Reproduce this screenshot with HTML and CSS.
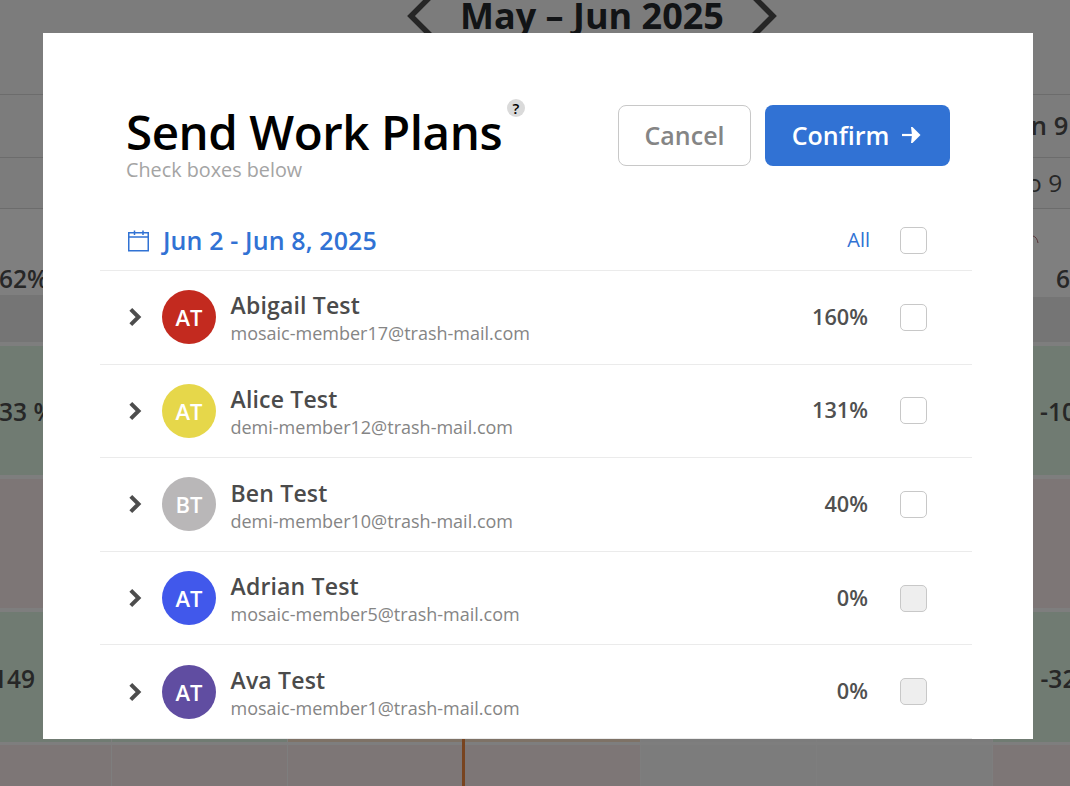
FILE: index.html
```html
<!DOCTYPE html>
<html lang="en">

<head>
    <meta charset="UTF-8">
    <meta name="viewport" content="width=device-width, initial-scale=1.0">
    <title>Send Work Plans</title>
    <link rel="stylesheet" href="styles.css">
</head>

<body>

    <!-- Planner page behind the modal -->
    <div class="planner">
        <div class="month-nav">
            <svg class="month-arrow" width="28" height="46" viewBox="0 0 28 46"><path d="M26.5 .5 L4 23 L26.5 45.5"/></svg>
            <h2>May – Jun 2025</h2>
            <svg class="month-arrow" width="28" height="46" viewBox="0 0 28 46"><path d="M1.5 .5 L24 23 L1.5 45.5"/></svg>
        </div>
        <div class="row dates">
            <div class="cell first"></div>
            <div class="cell last">Jun 9</div>
        </div>
        <div class="row days">
            <div class="cell first"></div>
            <div class="cell last">Mo 9</div>
        </div>
        <div class="row totals">
            <div class="cell first">62%</div>
            <div class="cell last">
                <svg class="spark" width="8" height="10" viewBox="0 0 8 10"><path d="M0 1 Q4 2 5 8"/></svg>
                62%
            </div>
        </div>
        <div class="row band">
            <div class="cell first"></div>
            <div class="cell last"></div>
        </div>
        <div class="row">
            <div class="cell first green">33 %</div>
            <div class="cell last green">-106 %</div>
        </div>
        <div class="row">
            <div class="cell first pink"></div>
            <div class="cell last pink"></div>
        </div>
        <div class="row tall">
            <div class="cell first green shift">149</div>
            <div class="cell green"></div>
            <div class="cell orange"></div>
            <div class="cell orange"></div>
            <div class="cell gray"></div>
            <div class="cell gray"></div>
            <div class="cell last green">-32 %</div>
        </div>
        <div class="row">
            <div class="cell first pink"></div>
            <div class="cell pink"></div>
            <div class="cell pink today"></div>
            <div class="cell pink"></div>
            <div class="cell gray"></div>
            <div class="cell gray"></div>
            <div class="cell last pink"></div>
        </div>
    </div>

    <div class="overlay">
        <div class="modal">
            <div class="modal-header">
                <div class="heading">
                    <h1>Send Work Plans<span class="help">?</span></h1>
                    <p>Check boxes below</p>
                </div>
                <button class="btn cancel">Cancel</button>
                <button class="btn confirm">Confirm
                    <svg width="19" height="18" viewBox="0 0 19 18"><path d="M0 9 H11" stroke="#fff" stroke-width="2.2"/><path d="M9 1 H10.5 L18.5 9 L10.5 17 H9 L10 9 Z" fill="#fff"/></svg>
                </button>
            </div>

            <div class="week">
                <svg class="calendar" width="22" height="22" viewBox="0 0 22 22"><path d="M.75 2.75 H20.25 V20.75 H.75 Z M.75 7 H20.25 M6.5 .5 V5 M15 .5 V5"/></svg>
                <span class="week-range">Jun 2 - Jun 8, 2025</span>
                <span class="all">All</span>
                <span class="checkbox"></span>
            </div>

            <div class="member">
                <svg class="chevron" width="14" height="20" viewBox="0 0 14 20"><path d="M2.8 2.3 L10.5 10 L2.8 17.7"/></svg>
                <div class="avatar red">AT</div>
                <div class="info">
                    <div class="name">Abigail Test</div>
                    <div class="email">mosaic-member17@trash-mail.com</div>
                </div>
                <span class="percent">160%</span>
                <span class="checkbox"></span>
            </div>
            <div class="member">
                <svg class="chevron" width="14" height="20" viewBox="0 0 14 20"><path d="M2.8 2.3 L10.5 10 L2.8 17.7"/></svg>
                <div class="avatar yellow">AT</div>
                <div class="info">
                    <div class="name">Alice Test</div>
                    <div class="email">demi-member12@trash-mail.com</div>
                </div>
                <span class="percent">131%</span>
                <span class="checkbox"></span>
            </div>
            <div class="member">
                <svg class="chevron" width="14" height="20" viewBox="0 0 14 20"><path d="M2.8 2.3 L10.5 10 L2.8 17.7"/></svg>
                <div class="avatar silver">BT</div>
                <div class="info">
                    <div class="name">Ben Test</div>
                    <div class="email">demi-member10@trash-mail.com</div>
                </div>
                <span class="percent">40%</span>
                <span class="checkbox"></span>
            </div>
            <div class="member">
                <svg class="chevron" width="14" height="20" viewBox="0 0 14 20"><path d="M2.8 2.3 L10.5 10 L2.8 17.7"/></svg>
                <div class="avatar blue">AT</div>
                <div class="info">
                    <div class="name">Adrian Test</div>
                    <div class="email">mosaic-member5@trash-mail.com</div>
                </div>
                <span class="percent">0%</span>
                <span class="checkbox disabled"></span>
            </div>
            <div class="member">
                <svg class="chevron" width="14" height="20" viewBox="0 0 14 20"><path d="M2.8 2.3 L10.5 10 L2.8 17.7"/></svg>
                <div class="avatar purple">AT</div>
                <div class="info">
                    <div class="name">Ava Test</div>
                    <div class="email">mosaic-member1@trash-mail.com</div>
                </div>
                <span class="percent">0%</span>
                <span class="checkbox disabled"></span>
            </div>
        </div>
    </div>

</body>

</html>
```
FILE: styles.css
```css
* {
    box-sizing: border-box;
}

body {
    margin: 0;
    height: 786px;
    overflow: hidden;
    font-family: "Open Sans", "Noto Sans", sans-serif;
}

h1, h2, p {
    margin: 0;
}

/* Planner */
.planner {
    height: 786px;
    overflow: hidden;
    background-color: #fff;
}

.month-nav {
    display: flex;
    justify-content: space-between;
    height: 95px;
    padding: 0 293px 0 407px;
    background-color: #f8f8f8;
    border-bottom: 1px solid #d8d8d8;
}

.month-nav h2 {
    margin-top: -9px;
    font-size: 36px;
    line-height: 50px;
    color: #25282c;
    white-space: nowrap;
}

.month-arrow {
    margin-top: -7px;
    fill: none;
    stroke: #4c4c4c;
    stroke-width: 5.5;
}

.row {
    display: flex;
    height: 133px;
    border-bottom: 4px solid #fdfdfd;
    font-size: 24.5px;
    font-weight: 600;
    color: #4e4e4e;
}

.row.tall {
    border-bottom-width: 3px;
}

.cell {
    display: flex;
    flex-shrink: 0;
    align-items: center;
    width: 176.3px;
    padding-top: 2px;
    border-right: 1px solid #fdfdfd;
    white-space: nowrap;
}

.cell.first {
    width: 112px;
    text-indent: -1px;
}

.cell.last {
    width: 77px;
    margin-left: auto;
    padding-left: 47px;
    border: 0;
    overflow: hidden;
}

.dates, .days {
    height: 63px;
    padding-bottom: 4px;
    background-color: #f8f8f8;
    border-bottom: 1px solid #d8d8d8;
}

.days {
    height: 51px;
    font-weight: 400;
}

.dates .cell, .days .cell {
    border: 0;
}

.dates .cell.last {
    padding-left: 14px;
    font-size: 25.5px;
}

.days .cell.last {
    padding-left: 12px;
}

.totals {
    height: 86px;
    border: 0;
}

.totals .cell {
    align-items: flex-end;
    border: 0;
}

.totals .cell.last {
    padding-left: 40px;
}

.spark {
    flex-shrink: 0;
    margin: 0 15px 50px 0;
    fill: none;
    stroke: #b06870;
}

.band {
    height: 51px;
}

.band .cell {
    border: 0;
    background-color: #eaeaea;
}

.band .cell.last {
    margin-top: 2px;
}

.green {
    background-color: #e0f6e5;
}

.pink {
    background-color: #fbeded;
}

.orange {
    background-color: #fce4cc;
}

.gray {
    background-color: #f9f9f9;
}

.cell.shift {
    padding-top: 3px;
    text-indent: -7px;
}

.today {
    position: relative;
}

.today::after {
    content: "";
    position: absolute;
    top: -6px;
    right: -1px;
    bottom: 0;
    width: 3px;
    background-color: #f08840;
}

/* Modal */
.overlay {
    position: fixed;
    inset: 0;
    padding: 33px 37px 47px 43px;
    background-color: rgba(0, 0, 0, 0.5);
}

.modal {
    height: 706px;
    padding: 72px 61px 0 57px;
    overflow: hidden;
    background-color: #fff;
}

.modal-header {
    display: flex;
    height: 106px;
    padding: 0 22px 0 26px;
}

.heading {
    flex: 1;
}

h1 {
    position: relative;
    font-size: 47.5px;
    font-weight: 600;
    letter-spacing: -0.45px;
    line-height: 54px;
    white-space: nowrap;
}

.heading p {
    font-size: 19.8px;
    line-height: 22px;
    color: #a4a4a4;
}

.help {
    position: absolute;
    left: 381px;
    top: -6px;
    width: 18px;
    height: 18px;
    border-radius: 50%;
    background-color: #dadada;
    font-size: 15px;
    letter-spacing: 0;
    line-height: 18px;
    text-align: center;
}

.btn {
    height: 61px;
    padding-bottom: 3px;
    border-radius: 8px;
    font-family: inherit;
    font-size: 25px;
    font-weight: 600;
}

.cancel {
    width: 133px;
    margin-right: 14px;
    border: 1px solid #c8c8c8;
    background-color: #fff;
    color: #858585;
}

.confirm {
    display: flex;
    align-items: center;
    justify-content: center;
    gap: 13px;
    width: 185px;
    padding-right: 8px;
    border: 0;
    background-color: #3172d4;
    color: #fff;
}

.week {
    display: flex;
    align-items: center;
    height: 60px;
    padding: 0 45px 0 28px;
    border-bottom: 1px solid #ebebeb;
    color: #3172d4;
}

.calendar {
    margin-right: 13px;
    fill: none;
    stroke: #3172d4;
    stroke-width: 1.5;
}

.week-range {
    flex: 1;
    padding-bottom: 2px;
    font-size: 25px;
    font-weight: 600;
    letter-spacing: 0.12px;
}

.all {
    margin-right: 30px;
    padding-bottom: 2px;
    font-size: 20px;
}

.checkbox {
    width: 27px;
    height: 27px;
    border: 1px solid #c8c8c8;
    border-radius: 5px;
}

.checkbox.disabled {
    background-color: #eee;
}

.member {
    display: flex;
    align-items: center;
    height: 93.6px;
    padding: 0 45px 0 28px;
    border-bottom: 1px solid #ebebeb;
}

.chevron {
    margin-right: 20px;
    fill: none;
    stroke: #4d4d4d;
    stroke-width: 4;
}

.avatar {
    width: 54px;
    height: 54px;
    margin-right: 14.5px;
    border-radius: 50%;
    color: #fff;
    font-size: 22px;
    font-weight: 600;
    line-height: 54px;
    text-align: center;
}

.red { background-color: #c32a1f; }
.yellow { background-color: #e6d74a; }
.silver { background-color: #b9b7b8; }
.blue { background-color: #4158eb; }
.purple { background-color: #604da1; }

.info {
    flex: 1;
    padding-top: 2.4px;
}

.name {
    font-size: 23px;
    font-weight: 600;
    letter-spacing: 0.18px;
    line-height: 30px;
    color: #4b4b4b;
}

.email {
    font-size: 18px;
    line-height: 26px;
    color: #858585;
}

.percent {
    margin-right: 32px;
    padding-bottom: 2px;
    font-size: 21.7px;
    font-weight: 600;
    color: #505050;
}
```
